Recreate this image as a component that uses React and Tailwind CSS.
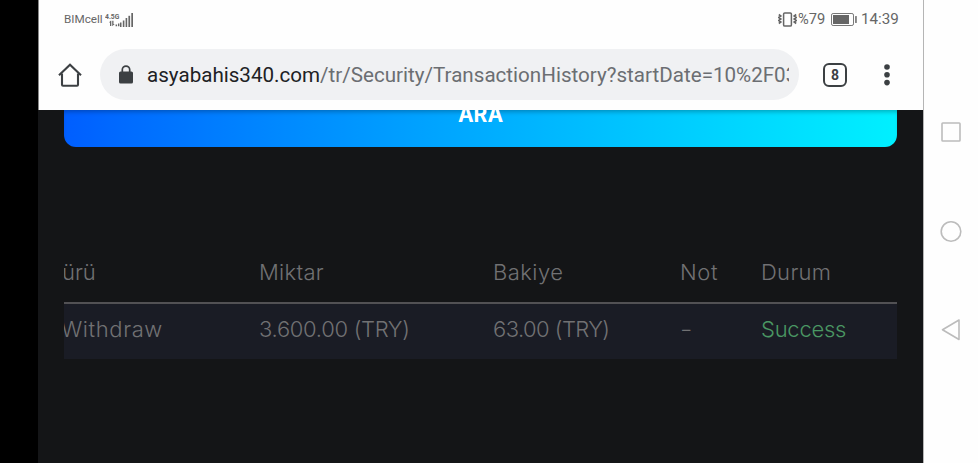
import React from 'react';

const columns = [
    { label: 'ürü', style: '-ml-[2px]' },
    { label: 'Miktar', style: '-ml-px tracking-[0.3px]' },
    { label: 'Bakiye', style: 'tracking-[0.45px]' },
    { label: 'Not', style: 'tracking-[0.6px]' },
    { label: 'Durum', style: 'tracking-[0.3px]' },
];

const rows = [
    { type: 'Withdraw', amount: '3.600.00 (TRY)', balance: '63.00 (TRY)', note: '-', status: 'Success' },
];

const SignalIcon = () => (
    <svg width="12" height="7" viewBox="0 0 12 7" fill="#666">
        <path d="M1.6 .8 0 2.6h1V6h1.3V.8ZM3.2 .8v5.4L5.7 4H4.5V.8Z" />
        <path d="M6.6 4.5h1.5V6.2H6.6ZM9 3.6h1.4v2.6H9Z" />
    </svg>
);

const SignalBars = () => (
    <svg width="14" height="14" viewBox="0 0 14 14" fill="#666">
        <rect x="0" y="9.5" width="1.5" height="4.5" />
        <rect x="2.8" y="7.5" width="1.6" height="6.5" />
        <rect x="5.6" y="5" width="1.6" height="9" />
        <rect x="8.4" y="2.8" width="1.7" height="11.2" />
        <rect x="11.3" y="0" width="1.7" height="14" />
    </svg>
);

const VibrateIcon = () => (
    <svg width="19" height="15" viewBox="0 0 19 15" fill="none" stroke="#666">
        <rect x="5.6" y=".9" width="7.8" height="13.2" rx="1.2" strokeWidth="1.5" />
        <path d="M.8 2.5 2.8 4 .8 5.5l2 1.5-2 1.5 2 1.5-2 1.5M18.2 2.5 16.2 4l2 1.5-2 1.5 2 1.5-2 1.5 2 1.5" strokeWidth="1.6" />
    </svg>
);

const BatteryIcon = () => (
    <svg width="26" height="13" viewBox="0 0 26 13" fill="none">
        <rect x=".5" y=".5" width="22" height="12" rx="1.6" stroke="#777" />
        <rect x="2" y="2" width="16" height="9" fill="#666" />
        <rect x="24.2" y="3" width="1.5" height="7" rx=".6" fill="#666" />
    </svg>
);

const HomeIcon = () => (
    <svg width="24" height="24" viewBox="0 0 24 24" fill="none" stroke="#3c4043" strokeWidth="2.1">
        <path d="M1 12.2 12 1.7l11 10.5" />
        <path d="M4 10.5v11.2q0 1 1 1h14q1 0 1-1V10.5" />
    </svg>
);

const LockIcon = () => (
    <svg width="14" height="19" viewBox="0 0 14 19" fill="none">
        <path d="M3.3 8V4.8a3.7 3.7 0 0 1 7.4 0V8" stroke="#3c4043" strokeWidth="1.7" />
        <rect y="6.5" width="14" height="12" rx="1.6" fill="#3c4043" />
    </svg>
);

const MenuDots = () => (
    <svg width="6" height="22" viewBox="0 0 6 22" fill="#3c4043">
        <circle cx="3" cy="3" r="2.8" />
        <circle cx="3" cy="10.8" r="2.8" />
        <circle cx="3" cy="18.6" r="2.8" />
    </svg>
);

const StatusBar = () => (
    <div className="h-[39px] pl-[26px] pr-[23px] flex items-center justify-between text-[#666]">
        <div className="flex items-center">
            <span className="text-[11.7px] w-[41px] whitespace-nowrap leading-none">BIMcell</span>
            <div className="flex flex-col w-[15px] h-[14px]">
                <span className="block text-[8px] leading-[7px] font-bold whitespace-nowrap origin-left scale-x-85">4.5G</span>
                <div className="pl-[4px]"><SignalIcon /></div>
            </div>
            <SignalBars />
        </div>
        <div className="flex items-center text-[14px] leading-none">
            <VibrateIcon />
            <span className="ml-px w-[30px] whitespace-nowrap text-[14.7px]">%79</span>
            <span className="ml-[3px]"><BatteryIcon /></span>
            <span className="ml-[4px] w-[39px] whitespace-nowrap text-[15.2px]">14:39</span>
        </div>
    </div>
);

const Toolbar = () => (
    <div className="h-[71px] pl-[20px] pt-[10px] flex items-start">
        <div className="h-[51px] w-[42px] flex items-center"><HomeIcon /></div>
        <div className="h-[51px] w-[699px] rounded-full bg-[#f0f1f3] pl-[19px] flex items-center">
            <LockIcon />
            <div className="ml-[14px] w-[642px] overflow-hidden whitespace-nowrap text-[20.6px] leading-[30px] text-[#6b6e72]">
                <span className="text-[#202124]">asyabahis340.com</span>/tr/Security/TransactionHistory?startDate=10%2F03
            </div>
        </div>
        <div className="h-[51px] ml-[24px] flex items-center">
            <div className="w-6 h-6 border-[2.5px] border-[#3c4043] rounded-[6px] flex items-center justify-center text-[14px] font-bold leading-none text-[#3c4043]">
                8
            </div>
        </div>
        <div className="h-[51px] ml-[37px] flex items-center"><MenuDots /></div>
    </div>
);

const TransactionTable = () => (
    <div className="mt-[96px] mx-[26px] overflow-hidden font-['Inter',sans-serif] font-light text-[22px] leading-[30px] text-[#717173]">
        <div className="h-[61px] pt-[14px] grid grid-cols-[196px_233px_187px_81px_1fr] border-b-2 border-[#525154] whitespace-nowrap">
            {columns.map((column) => (
                <span key={column.label} className={column.style}>{column.label}</span>
            ))}
        </div>
        {rows.map((row) => (
            <div key={row.type} className="h-[55px] pt-[10px] grid grid-cols-[196px_233px_187px_81px_1fr] bg-[#1a1c25] whitespace-nowrap">
                <span className="-ml-[3px] tracking-[0.6px]">{row.type}</span>
                <span className="-ml-px tracking-[-0.3px]">{row.amount}</span>
                <span className="tracking-[-0.55px]">{row.balance}</span>
                <span className="inline-block origin-left scale-x-125">{row.note}</span>
                <span className="tracking-[-0.25px] text-[#4a9763]">{row.status}</span>
            </div>
        ))}
    </div>
);

const NavigationBar = () => (
    <div className="w-[55px] bg-[#fefefe] border-l border-[#b5b5b5] pt-[121px] pr-px flex flex-col items-center">
        <svg width="22" height="22" viewBox="0 0 22 22" fill="none" stroke="#bcbcbc" strokeWidth="1.6">
            <rect x="2" y="2" width="18" height="18" rx=".8" />
        </svg>
        <svg className="mt-[77px]" width="24" height="24" viewBox="0 0 24 24" fill="none" stroke="#bcbcbc" strokeWidth="1.6">
            <circle cx="12" cy="11.5" r="9.8" />
        </svg>
        <svg className="mt-[74px]" width="22" height="24" viewBox="0 0 22 24" fill="none" stroke="#bcbcbc" strokeWidth="1.6" strokeLinejoin="round">
            <path d="M19 2v19.5L2.5 11.7Z" />
        </svg>
    </div>
);

const App = () => {
    return (
        <div className="w-[978px] h-[463px] flex bg-black overflow-hidden font-['Roboto',sans-serif]">
            <div className="ml-[38px] w-[885px] flex flex-col bg-[#141517]">
                <header className="h-[110px] bg-[#fefefe] border-l border-[#888]">
                    <div className="-ml-px">
                        <StatusBar />
                        <Toolbar />
                    </div>
                </header>
                <main>
                    {/* Search button, scrolled partly under the toolbar */}
                    <button className="mx-[26px] w-[833px] h-[37px] block overflow-hidden rounded-b-[12px] bg-gradient-to-r from-[#005eff] to-[#00f0ff] shadow-[inset_0_4px_4px_-2px_rgba(0,0,0,0.25)]">
                        <span className="block h-[37px] overflow-hidden">
                            <span className="block -mt-[7px] text-[21px] leading-[24px] font-bold text-white font-['Inter',sans-serif]">ARA</span>
                        </span>
                    </button>
                    <TransactionTable />
                </main>
            </div>
            <NavigationBar />
        </div>
    );
};

export default App;
